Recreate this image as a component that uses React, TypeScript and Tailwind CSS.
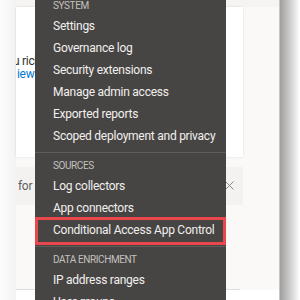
import React from 'react';

type Section = { title: string; items: string[] };

const sections: Section[] = [
    {
        title: 'System',
        items: [
            'Settings',
            'Governance log',
            'Security extensions',
            'Manage admin access',
            'Exported reports',
            'Scoped deployment and privacy',
        ],
    },
    {
        title: 'Sources',
        items: ['Log collectors', 'App connectors', 'Conditional Access App Control'],
    },
    {
        title: 'Data enrichment',
        items: ['IP address ranges', 'User groups'],
    },
];

const highlighted = 'Conditional Access App Control';

function SettingsMenu() {
    return (
        <div className="absolute left-[35px] top-[-5px] w-[191px] bg-[#474543] text-[#f1f0ef]">
            {sections.map((section, i) => (
                <div key={section.title}>
                    {i > 0 && <div className="mt-[5px] mb-[2px] h-px bg-[#5f5d5b]" />}
                    <div className="h-[20px] flex items-center pl-[18px] text-[10px] tracking-[-0.4px] uppercase text-[#c3c1bf]">
                        {section.title}
                    </div>
                    {section.items.map((item) => (
                        <div key={item} className="relative h-[22px] flex items-center pl-[18px] text-[12px] tracking-[-0.25px] whitespace-nowrap">
                            {item}
                            {item === highlighted && (
                                <span className="absolute inset-x-0 top-[-2px] bottom-[-4px] border-[3px] border-[#e8474b]" />
                            )}
                        </div>
                    ))}
                </div>
            ))}
        </div>
    );
}

export default function App() {
    return (
        <div className="relative w-[300px] h-[300px] overflow-hidden flex bg-white font-['Roboto',sans-serif]">
            {/* left edge shade */}
            <div className="w-[16px] flex-none bg-gradient-to-r from-[#fdfdfd] to-[#f2f2f2]" />

            {/* page content */}
            <div className="w-[264px] flex-none bg-[#faf9f8] border-r border-[#c8c6c4] flex flex-col items-start">
                <div className="h-[7px] w-full flex-none bg-[#f5f4f2]" />
                <div className="w-[227px] h-[150px] flex-none overflow-hidden bg-white shadow-[0_0_2px_rgba(0,0,0,0.12)] pt-[48px] text-[12px] leading-[13px] tracking-[-0.3px]">
                    <div className="ml-[-3px] text-[#323130] whitespace-nowrap">u rich</div>
                    <div className="ml-[1px] text-[#0078d4] whitespace-nowrap">iew</div>
                </div>
                <div className="mt-[10px] w-[227px] h-[38px] flex-none bg-[#f3f2f1] flex items-center justify-between pl-[2px] pr-[9px] text-[12px] tracking-[-0.3px] text-[#605e5c]">
                    <span>for c</span>
                    <svg width="9" height="9" viewBox="0 0 9 9" className="mt-[-2px]">
                        <path d="M0.5 0.5 L8.5 8.5 M8.5 0.5 L0.5 8.5" stroke="#8a8886" strokeWidth="1" fill="none" />
                    </svg>
                </div>
                <div className="mt-[84px] w-[224px] h-px flex-none bg-[#e1dfdd]" />
                <div className="w-full flex-1 bg-white" />
            </div>

            {/* panel shadow on the right */}
            <div className="flex-1 bg-gradient-to-r from-[#9e9e9e] to-white" />

            <SettingsMenu />
        </div>
    );
}
